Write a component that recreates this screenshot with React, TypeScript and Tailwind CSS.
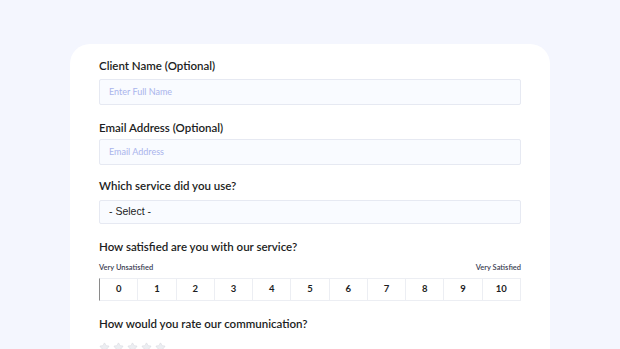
import { Star } from 'lucide-react';

const scale = Array.from({ length: 11 }, (_, i) => i);

function Label({ children }: { children: string }) {
  return <label className="block text-[11.5px] font-semibold text-[#1c1d22] leading-none">{children}</label>;
}

export default function App() {
  return (
    <div className="h-[349px] w-[620px] overflow-hidden bg-[#f4f6fe] pt-[44px] font-['Lato',sans-serif]">
      <div className="mx-[70px] h-[400px] rounded-[20px] bg-white px-[29px] pt-[16px]">
        <Label>Client Name (Optional)</Label>
        <div className="mt-[7px] flex h-[26px] items-center rounded-[2px] border border-[#e6e9f2] bg-[#f9fbff] px-[9px] text-[9px] text-[#aab4ec]">
          Enter Full Name
        </div>

        <div className="mt-[17px]">
          <Label>Email Address (Optional)</Label>
        </div>
        <div className="mt-[6px] flex h-[26px] items-center rounded-[2px] border border-[#e6e9f2] bg-[#f9fbff] px-[9px] text-[9px] text-[#aab4ec]">
          Email Address
        </div>

        <div className="mt-[15px]">
          <Label>Which service did you use?</Label>
        </div>
        <div className="mt-[8px] flex h-[24px] items-center rounded-[2px] border border-[#e6e9f2] bg-[#f9fbff] px-[9px] font-['Liberation_Sans',sans-serif] text-[10.5px] text-[#222]">
          - Select -
        </div>

        <div className="mt-[17px]">
          <Label>How satisfied are you with our service?</Label>
        </div>
        <div className="mt-[12px] flex justify-between text-[7.5px] font-semibold leading-none text-[#3a3d52]">
          <span>Very Unsatisfied</span>
          <span>Very Satisfied</span>
        </div>
        <div className="mt-[6px] flex h-[23px] border border-[#eceef3] border-l-[#8a8a8a]">
          {scale.map((n) => (
            <div
              key={n}
              className="flex flex-1 items-center justify-center border-l border-[#eceef3] text-[9.5px] font-bold text-[#1c1d22] first:border-l-0"
            >
              {n}
            </div>
          ))}
        </div>

        <div className="mt-[17px]">
          <Label>How would you rate our communication?</Label>
        </div>
        <div className="mt-[13px] flex gap-[3px] text-[#dcdee4]">
          {[0, 1, 2, 3, 4].map((i) => (
            <Star key={i} size={11} strokeWidth={1.5} fill="#eceef2" />
          ))}
        </div>
      </div>
    </div>
  );
}
